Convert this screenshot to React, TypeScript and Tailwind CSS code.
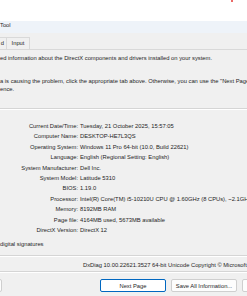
import React from 'react';

const rows: [string, string][] = [
  ['Current Date/Time:', 'Tuesday, 21 October 2025, 15:57:05'],
  ['Computer Name:', 'DESKTOP-HE7L3QS'],
  ['Operating System:', 'Windows 11 Pro 64-bit (10.0, Build 22621)'],
  ['Language:', 'English (Regional Setting: English)'],
  ['System Manufacturer:', 'Dell Inc.'],
  ['System Model:', 'Latitude 5310'],
  ['BIOS:', '1.19.0'],
  ['Processor:', 'Intel(R) Core(TM) i5-10210U CPU @ 1.60GHz (8 CPUs), ~2.1GHz'],
  ['Memory:', '8192MB RAM'],
  ['Page file:', '4164MB used, 5673MB available'],
  ['DirectX Version:', 'DirectX 12'],
];

const Separator: React.FC = () => (
  <div className="h-[2px] border-t border-[#d5d5d5] border-b border-b-white" />
);

const App: React.FC = () => {
  return (
    <div className="relative w-[247px] h-[296px] overflow-hidden bg-[#f0f0f0] text-[5.8px] text-[#1e1e1e] font-['Liberation_Sans',Arial,sans-serif] whitespace-nowrap">
      {/* desktop strip above the window */}
      <div className="h-[21px] bg-white">
        <div className="absolute left-[231px] top-0 w-[2px] h-[2px] rounded-full bg-[#e53935]" />
      </div>

      {/* title bar */}
      <div className="h-[12px] bg-[#eef3f9] leading-[9px]">Tool</div>

      {/* tabs */}
      <div className="h-[17px] flex items-end border-b border-[#d9d9d9]">
        <div className="h-[12px] w-[7px] border-t border-r border-[#d9d9d9] flex items-center justify-end pr-[2px]">d</div>
        <div className="h-[12px] w-[23px] border-t border-r border-[#d9d9d9] flex items-center justify-center">Input</div>
      </div>

      {/* tab page */}
      <div className="flex flex-col">
        <div className="pt-[3px] leading-[10px]">
          ed information about the DirectX components and drivers installed on your system.
        </div>
        <div className="pt-[14px] leading-[8px]">
          <div>a is causing the problem, click the appropriate tab above. Otherwise, you can use the "Next Page"</div>
          <div>ence.</div>
        </div>
        <div className="pt-[15px]">
          <Separator />
        </div>

        <div className="pt-[11px] grid grid-cols-[80px_1fr] leading-[10.4px]">
          {rows.map(([label, value]) => (
            <React.Fragment key={label}>
              <div className="text-right pr-[2px]">{label}</div>
              <div>{value}</div>
            </React.Fragment>
          ))}
        </div>

        <div className="pt-[4px] leading-[10px]">digital signatures</div>
      </div>

      <div className="pt-[6px]">
        <Separator />
      </div>
      <div className="pl-[83px] leading-[10px] pt-[3px]">
        DxDiag 10.00.22621.3527 64-bit Unicode  Copyright © Microsoft. All rights reserved.
      </div>
      <div className="pt-[1px]">
        <Separator />
      </div>

      {/* buttons */}
      <div className="flex items-center pt-[6px] gap-[5px]">
        <div className="shrink-0 w-[68px] h-[13px] -ml-[66px] bg-[#fdfdfd] border border-[#cfcfcf] rounded-[2px] flex items-center justify-center">Help</div>
        <div className="shrink-0 ml-[93px] w-[66px] h-[13px] bg-white border border-[#0067c0] rounded-[2px] flex items-center justify-center">Next Page</div>
        <div className="shrink-0 w-[66px] h-[13px] bg-[#fdfdfd] border border-[#cfcfcf] rounded-[2px] flex items-center justify-center">Save All Information...</div>
        <div className="shrink-0 w-[66px] h-[13px] bg-[#fdfdfd] border border-[#cfcfcf] rounded-[2px] flex items-center justify-center">Exit</div>
      </div>
    </div>
  );
};

export default App;
